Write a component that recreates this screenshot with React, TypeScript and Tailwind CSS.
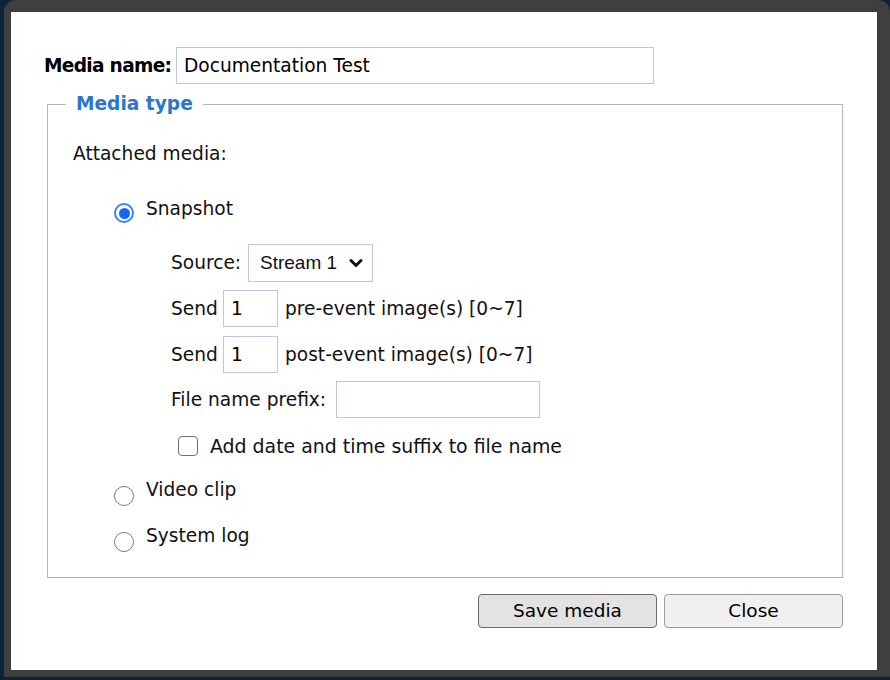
import React from 'react';

const Radio = ({ checked }: { checked?: boolean }) =>
  checked ? (
    <span className="mt-[6px] flex h-[20px] w-[20px] shrink-0 items-center justify-center rounded-full border-2 border-[#3583f7] bg-white">
      <span className="h-[11px] w-[11px] rounded-full bg-[#1466f5]" />
    </span>
  ) : (
    <span className="mt-[6px] h-[20px] w-[20px] shrink-0 rounded-full border border-[#7d7d7d] bg-white" />
  );

const TextBox = ({ value, className }: { value?: string; className: string }) => (
  <div className={`flex items-center border border-[#bcc6de] bg-white px-[7px] text-black ${className}`}>{value}</div>
);

const App = () => {
  return (
    <div className="h-[680px] w-[890px] overflow-hidden bg-[#0e2238] font-['DejaVu_Sans',sans-serif] text-[18.6px] leading-[24px] text-[#111]">
      <div className="ml-[4px] h-[677px] w-[886px] rounded-t-[12px] bg-[#3f3f3f] pl-[7px] pr-[13px] pt-[12px] pb-[7px]">
        <div className="h-[658px] w-[866px] bg-white pt-[35px]">
          {/* Media name */}
          <div className="flex h-[37px] items-center">
            <span className="ml-[33px] w-[132px] font-bold tracking-[-0.7px] text-black">Media name:</span>
            <TextBox value="Documentation Test" className="h-[37px] w-[478px]" />
          </div>

          <fieldset className="ml-[36px] mt-[8px] w-[796px] border border-[#b4b4b4] p-0">
            <legend className="ml-[18px] px-[10px] font-bold text-[#2a76cf]">Media type</legend>
            <div className="flex flex-col pb-[25px] pl-[25px] pt-[26px]">
              <div>Attached media:</div>

              <div className="ml-[41px] mt-[31px] flex items-start gap-[12px]">
                <Radio checked />
                <span>Snapshot</span>
              </div>

              <div className="ml-[98px] mt-[21px] flex items-center">
                <span className="w-[77px]">Source:</span>
                <div className="flex h-[38px] w-[125px] items-center border border-[#bcc6de] pl-[11px] font-['Liberation_Sans',sans-serif] text-[19px]">
                  <span>Stream 1</span>
                  <svg className="ml-[12px]" width="14" height="10" viewBox="0 0 14 10">
                    <path d="M2 2.5 L7 7.5 L12 2.5" fill="none" stroke="#111" strokeWidth="3" strokeLinecap="round" strokeLinejoin="round" />
                  </svg>
                </div>
              </div>

              <div className="ml-[98px] mt-[8px] flex items-center">
                <span className="w-[52px]">Send</span>
                <TextBox value="1" className="h-[37px] w-[55px]" />
                <span className="ml-[7px]">pre-event image(s) [0~7]</span>
              </div>

              <div className="ml-[98px] mt-[9px] flex items-center">
                <span className="w-[52px]">Send</span>
                <TextBox value="1" className="h-[37px] w-[55px]" />
                <span className="ml-[7px]">post-event image(s) [0~7]</span>
              </div>

              <div className="ml-[98px] mt-[8px] flex items-center">
                <span className="w-[165px]">File name prefix:</span>
                <TextBox className="h-[37px] w-[204px]" />
              </div>

              <div className="ml-[105px] mt-[16px] flex items-center gap-[12px]">
                <span className="h-[20px] w-[20px] shrink-0 rounded-[4px] border border-[#6e6e6e] bg-white" />
                <span className="text-[18.9px]">Add date and time suffix to file name</span>
              </div>

              <div className="ml-[41px] mt-[22px] flex items-start gap-[12px]">
                <Radio />
                <span className="-mt-[2px]">Video clip</span>
              </div>

              <div className="ml-[41px] mt-[20px] flex items-start gap-[12px]">
                <Radio />
                <span className="-mt-[2px]">System log</span>
              </div>
            </div>
          </fieldset>

          <div className="ml-[36px] mt-[16px] flex w-[796px] justify-end gap-[7px]">
            <button className="h-[34px] w-[179px] rounded-[4px] border border-[#6c6c6c] bg-[#e3e3e3] text-[18.5px] text-black">
              Save media
            </button>
            <button className="h-[34px] w-[179px] rounded-[4px] border border-[#9c9c9c] bg-[#f0f0f0] text-[18.5px] text-black">
              Close
            </button>
          </div>
        </div>
      </div>
    </div>
  );
};

export default App;
